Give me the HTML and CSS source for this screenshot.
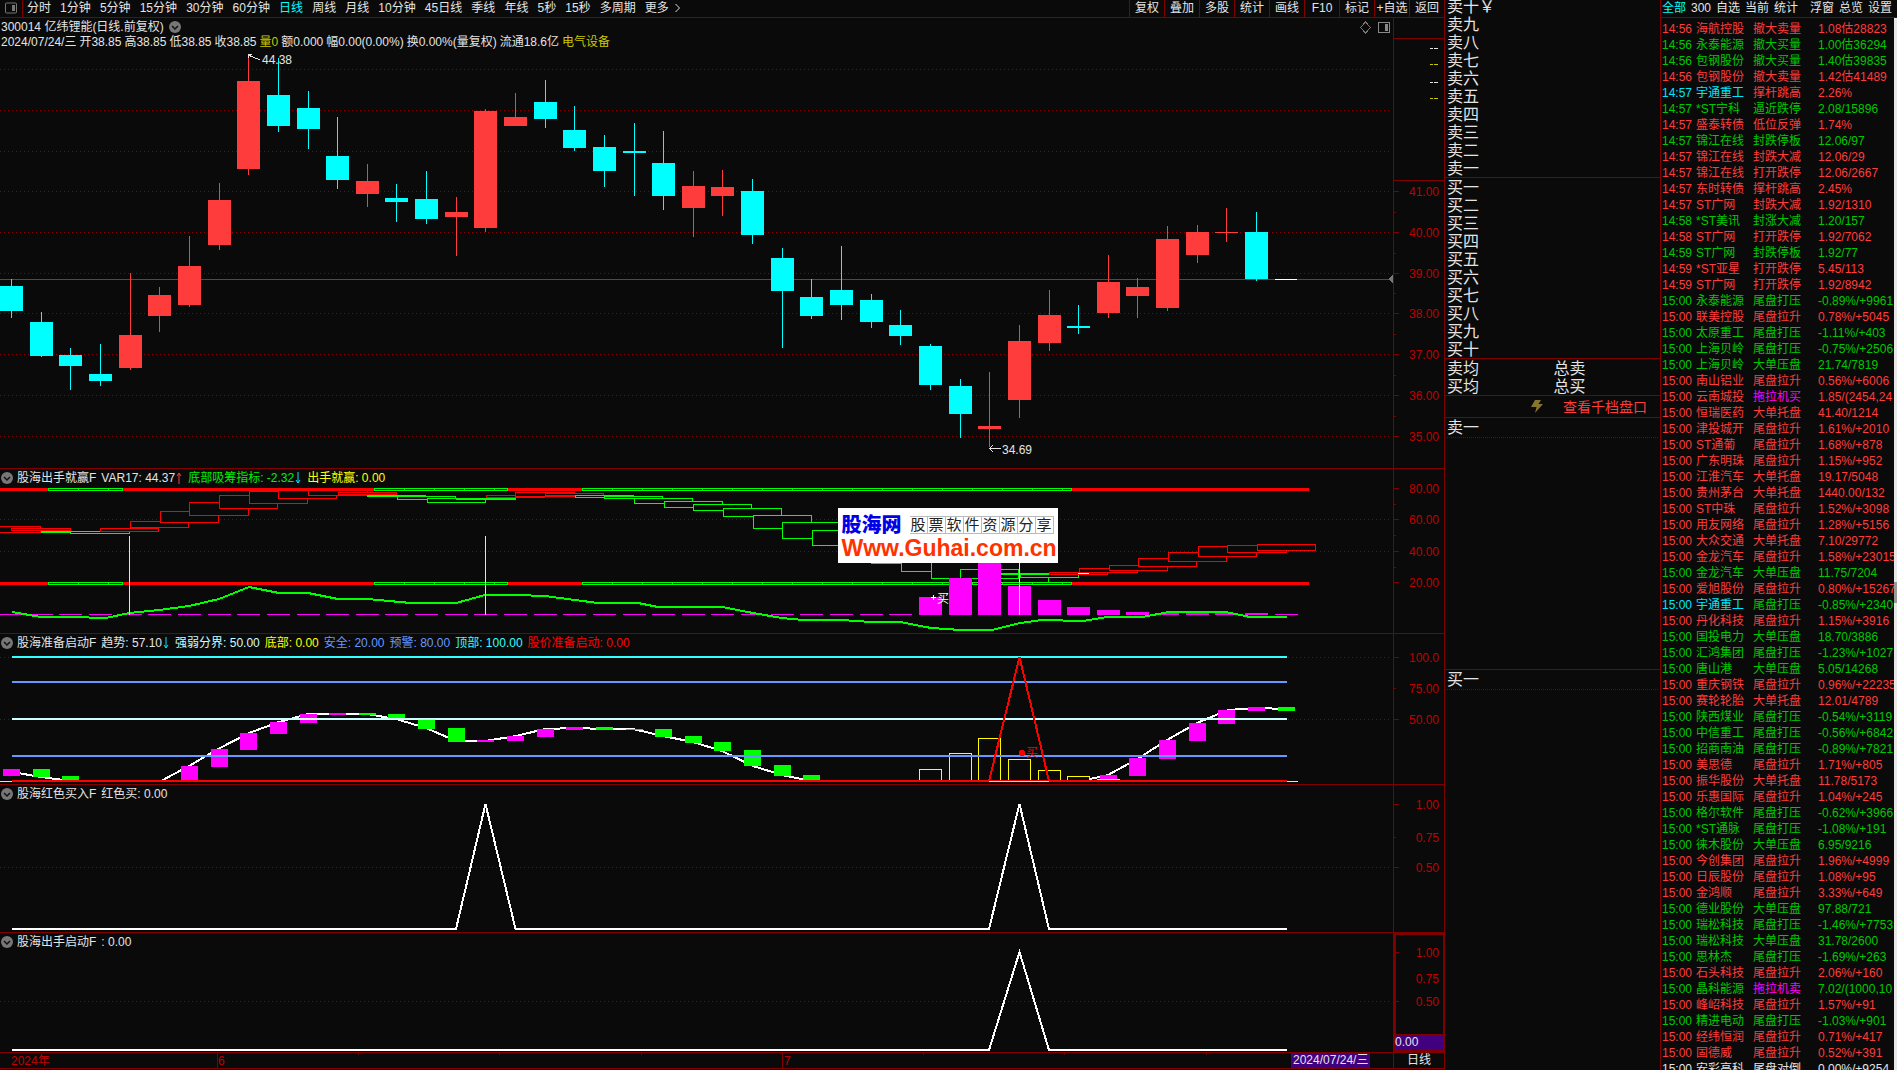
FILE: index.html
```html
<!DOCTYPE html>
<html lang="zh-CN">
<head>
<meta charset="utf-8">
<title>亿纬锂能 300014 日线</title>
<link rel="stylesheet" href="styles.css">
</head>
<body>
<div class="terminal">
  <main class="charts">
    <header class="toolbar">
      <button class="tool-icon" aria-label="侧栏"><svg width="14" height="12" viewBox="0 0 14 12"><rect x="1.5" y="1" width="11" height="10" rx="1" fill="none" stroke="#777"/><rect x="8" y="3" width="3" height="6" fill="#777"/></svg></button>
      <nav class="periods">
        <button>分时</button><button>1分钟</button><button>5分钟</button><button>15分钟</button><button>30分钟</button><button>60分钟</button><button class="active">日线</button><button>周线</button><button>月线</button><button>10分钟</button><button>45日线</button><button>季线</button><button>年线</button><button>5秒</button><button>15秒</button><button>多周期</button><button>更多<svg width="8" height="10" viewBox="0 0 8 10"><path d="M2.500 1l4 4-4 4" fill="none" stroke="#ddd"/></svg></button>
      </nav>
      <div class="actions">
        <button>复权</button><button>叠加</button><button>多股</button><button>统计</button><button>画线</button><button>F10</button><button>标记</button><button>+自选</button><button>返回</button>
      </div>
    </header>

    <section class="panel">
      <svg class="plot" id="kline" viewBox="0 18 1393 450" preserveAspectRatio="none"></svg>
      <div class="caption">
        <div class="line"><span>300014 亿纬锂能(日线.前复权)</span><svg class="fold" viewBox="0 0 12 12"><circle cx="6" cy="6" r="6"/><path d="M3 5l3 3 3-3"/></svg></div>
        <div class="line tight"><span>2024/07/24/三</span><span>开38.85</span><span>高38.85</span><span>低38.85</span><span>收38.85</span><span class="gold">量0</span><span>额0.000</span><span>幅0.00(0.00%)</span><span>换0.00%(量复权)</span><span>流通18.6亿</span><span class="gold">电气设备</span></div>
      </div>
      <svg class="axis" id="kline-axis" viewBox="0 18 50 450" preserveAspectRatio="none"></svg>
    </section>

    <section class="panel">
      <svg class="plot" id="win" viewBox="0 469 1393 164" preserveAspectRatio="none"></svg>
      <div class="caption"><div class="line"><svg class="fold" viewBox="0 0 12 12"><circle cx="6" cy="6" r="6"/><path d="M3 5l3 3 3-3"/></svg><span>股海出手就赢F</span><span>VAR17: 44.37<svg class="arrow" viewBox="0 0 6 12"><path d="M3 12V1M1 4l2-3 2 3" stroke="#ff3c3c"/></svg></span><span class="green">底部吸筹指标: -2.32<svg class="arrow" viewBox="0 0 6 12"><path d="M3 0v11M1 8l2 3 2-3" stroke="#00e5ff"/></svg></span><span class="yellow">出手就赢: 0.00</span></div></div>
      <svg class="axis" id="win-axis" viewBox="0 469 50 164" preserveAspectRatio="none"></svg>
    </section>

    <section class="panel">
      <svg class="plot" id="ready" viewBox="0 634 1393 150" preserveAspectRatio="none"></svg>
      <div class="caption"><div class="line"><svg class="fold" viewBox="0 0 12 12"><circle cx="6" cy="6" r="6"/><path d="M3 5l3 3 3-3"/></svg><span>股海准备启动F</span><span>趋势: 57.10<svg class="arrow" viewBox="0 0 6 12"><path d="M3 0v11M1 8l2 3 2-3" stroke="#00e5ff"/></svg></span><span class="pale">强弱分界: 50.00</span><span class="yellow">底部: 0.00</span><span class="blue">安全: 20.00</span><span class="blue">预警: 80.00</span><span class="cyan">顶部: 100.00</span><span class="red">股价准备启动: 0.00</span></div></div>
      <svg class="axis" id="ready-axis" viewBox="0 634 50 150" preserveAspectRatio="none"></svg>
    </section>

    <section class="panel">
      <svg class="plot" id="redbuy" viewBox="0 785 1393 147" preserveAspectRatio="none"></svg>
      <div class="caption"><div class="line"><svg class="fold" viewBox="0 0 12 12"><circle cx="6" cy="6" r="6"/><path d="M3 5l3 3 3-3"/></svg><span>股海红色买入F</span><span>红色买: 0.00</span></div></div>
      <svg class="axis" id="redbuy-axis" viewBox="0 785 50 147" preserveAspectRatio="none"></svg>
    </section>

    <section class="panel">
      <svg class="plot" id="launch" viewBox="0 933 1393 119" preserveAspectRatio="none"></svg>
      <div class="caption"><div class="line"><svg class="fold" viewBox="0 0 12 12"><circle cx="6" cy="6" r="6"/><path d="M3 5l3 3 3-3"/></svg><span>股海出手启动F</span><span>: 0.00</span></div></div>
      <svg class="axis" id="launch-axis" viewBox="0 933 50 119" preserveAspectRatio="none"></svg>
    </section>

    <footer class="dates">
      <svg class="plot" id="dates" viewBox="0 1053 1393 17" preserveAspectRatio="none"></svg>
      <div class="unit">日线</div>
    </footer>

    <a class="watermark" href="#guhai">
      <span class="wm-top"><b>股海网</b><span class="cells"><span>股</span><span>票</span><span>软</span><span>件</span><span>资</span><span>源</span><span>分</span><span>享</span></span></span>
      <strong>Www.Guhai.com.cn</strong>
    </a>
  </main>

  <aside class="book">
    <ul class="levels asks"><li>卖十￥</li><li>卖九</li><li>卖八</li><li>卖七</li><li>卖六</li><li>卖五</li><li>卖四</li><li>卖三</li><li>卖二</li><li>卖一</li></ul>
    <ul class="levels bids"><li>买一</li><li>买二</li><li>买三</li><li>买四</li><li>买五</li><li>买六</li><li>买七</li><li>买八</li><li>买九</li><li>买十</li></ul>
    <div class="totals"><span>卖均</span><span>总卖</span><span>买均</span><span>总买</span></div>
    <a class="depth" href="#depth"><svg width="12" height="13" viewBox="0 0 12 13"><path d="M4 0h6L7.500 4H12L4 13l1.500-6H0z" fill="#857530"/></svg>查看千档盘口</a>
    <div class="queue sell"><h2>卖一</h2></div>
    <div class="queue buy"><h2>买一</h2></div>
  </aside>

  <aside class="alerts">
    <header class="alert-tabs"><button class="active">全部</button><button>300</button><button>自选</button><button>当前</button><button>统计</button><span class="spacer"></span><button>浮窗</button><button>总览</button><button>设置</button></header>
    <div class="alert-body">
      <div class="alert-clip"><table><tbody id="alerts"></tbody></table></div>
      <div class="track"><div class="thumb"></div></div>
    </div>
  </aside>
</div>
<script src="app.js"></script>
</body>
</html>
```

FILE: styles.css
```css
* { box-sizing: border-box; }

html, body { margin: 0; height: 100%; }

body {
  background: #0a0a0a;
  color: #e4e4e4;
  font: 12px/16px "Liberation Sans", "Noto Sans CJK SC", sans-serif;
  overflow: hidden;
}

button {
  margin: 0;
  padding: 0 0 2px;
  border: 0;
  background: none;
  color: inherit;
  font: inherit;
  white-space: nowrap;
  cursor: pointer;
}

a { color: inherit; text-decoration: none; }

.terminal {
  display: grid;
  grid-template-columns: minmax(0, 1fr) 216px 236px;
  height: 100vh;
}

/* chart column */
.charts {
  position: relative;
  display: grid;
  grid-template-rows: 18px 451fr 165fr 151fr 148fr 120fr 17px;
  min-height: 0;
  border-right: 1px solid #800000;
}

.toolbar {
  display: flex;
  border-bottom: 1px solid #800000;
  line-height: 14px;
}

.tool-icon {
  display: flex;
  align-items: center;
  justify-content: center;
  width: 23px;
  border-right: 1px solid #800000;
}

.periods {
  display: flex;
  justify-content: space-between;
  width: 658px;
  padding-left: 4px;
}

.periods .active, .alert-tabs .active { color: #00ffff; }

.periods svg { margin-left: 4px; vertical-align: -1px; }

.actions { display: flex; margin-left: auto; }

.actions button { width: 35px; border-left: 1px solid #800000; }

.panel {
  display: grid;
  grid-template-columns: minmax(0, 1fr) 51px;
  min-height: 0;
  border-bottom: 1px solid #800000;
}

.plot {
  grid-area: 1 / 1;
  display: block;
  width: 100%;
  height: 100%;
  min-height: 0;
  overflow: hidden;
  shape-rendering: crispEdges;
}

.axis {
  grid-area: 1 / 2;
  display: block;
  width: 100%;
  height: 100%;
  min-height: 0;
  border-left: 1px solid #800000;
  shape-rendering: crispEdges;
}

.caption { grid-area: 1 / 1; align-self: start; z-index: 1; padding-top: 1px; }

.line {
  display: flex;
  align-items: center;
  gap: 5px;
  height: 16px;
  white-space: nowrap;
}

.caption .line { padding-left: 1px; }

.caption .tight { gap: 3px; height: 13px; }

.fold { width: 12px; height: 12px; fill: #777; }
.fold path { fill: none; stroke: #111; stroke-width: 1.5px; }

.caption .fold:first-child { margin-right: -1px; }

.arrow { width: 6px; height: 12px; margin: 0 1px; vertical-align: -2px; }
.arrow path { fill: none; }

.gold { color: #c8c800; }
.yellow { color: #ffff00; }
.green { color: #00f000; }
.blue { color: #6699ff; }
.cyan { color: #33ffff; }
.pale { color: #ccffff; }
.red { color: #ff0000; }

/* chart marks */
.grid { stroke: #900000; stroke-dasharray: 1 3; }
.tick { stroke: #800000; }
.up { fill: #ff3c3c; }
.down { fill: #00ffff; }
.label { fill: #c00000; }
.end { text-anchor: end; }
.note { fill: #e4e4e4; }
.rise { fill: #0a0a0a; stroke: #f00; }
.fall { fill: #0a0a0a; stroke: #0f0; }
.magenta { fill: #f0f; }
.lime { fill: #0f0; }
.pure-red { fill: #f00; }
.hollow { fill: #0a0a0a; }

.dates {
  display: grid;
  grid-template-columns: minmax(0, 1fr) 51px;
  min-height: 0;
}

.unit {
  border-left: 1px solid #800000;
  border-bottom: 1px solid #800000;
  height: 16px;
  line-height: 14px;
  text-align: center;
}

.watermark {
  position: absolute;
  left: 58%;
  top: 508px;
  display: flex;
  flex-direction: column;
  width: 220px;
  height: 55px;
  padding: 5px 4px 0;
  background: #fff;
  z-index: 2;
}

.wm-top { display: flex; justify-content: space-between; align-items: center; height: 24px; }
.wm-top b { color: #0000e6; font-size: 20px; font-weight: 900; }
.watermark strong { color: #ff3300; font: bold 23px/22px "Liberation Sans", sans-serif; }

.cells { display: flex; }

.cells span {
  width: 18px;
  height: 18px;
  border: 1px solid #bbb;
  border-left-width: 0;
  color: #222;
  font-size: 15px;
  line-height: 15px;
  text-align: center;
}

/* order book */
.book {
  display: flex;
  flex-direction: column;
  min-width: 0;
  border-right: 1px solid #800000;
  font-size: 16px;
  line-height: 18px;
}

.levels { margin: 0; padding: 0 2px; list-style: none; border-bottom: 1px solid #800000; }

.asks { height: 178px; }
.asks li:first-child { height: 16px; line-height: 14px; }
.bids { height: 181px; padding-top: 1px; }

.totals {
  display: grid;
  grid-template-columns: 1fr 1fr;
  height: 37px;
  padding: 1px 0 0 2px;
  border-bottom: 1px solid #800000;
}

.depth {
  display: flex;
  align-items: center;
  justify-content: flex-end;
  gap: 20px;
  height: 22px;
  padding-right: 13px;
  border-bottom: 1px solid #800000;
  color: #ff3c3c;
  font-size: 14px;
}

.queue h2 {
  height: 20px;
  margin: 0 2px;
  border-bottom: 1px dotted #800000;
  font: inherit;
  line-height: 20px;
}

.sell { height: 252px; border-bottom: 1px solid #800000; }

/* alert stream */
.alerts { display: flex; flex-direction: column; min-width: 0; min-height: 0; }

.alert-tabs {
  display: flex;
  gap: 5px;
  height: 18px;
  padding: 0 5px 0 1px;
  border-bottom: 1px solid #800000;
  line-height: 14px;
}

.spacer { flex: 1; }

.alert-body { display: flex; flex: 1; min-height: 0; }

.alert-clip { flex: 1; overflow: hidden; padding-top: 3px; }

.alerts table { width: 100%; table-layout: fixed; border-collapse: collapse; }

.alerts td { height: 16px; padding: 0; line-height: 16px; white-space: nowrap; }
.alerts td:nth-child(1) { width: 35px; padding-left: 1px; }
.alerts td:nth-child(2) { width: 57px; }
.alerts td:nth-child(3) { width: 65px; }

.r { color: #ff3c3c; }
.g { color: #00c800; }
.c { color: #00e5ff; }
.m { color: #ff00ff; }
.w { color: #e4e4e4; }

.track { width: 3px; background: #e8e8e8; }
.thumb { height: 21px; margin-top: 564px; background: #999; }
```

FILE: app.js
```js
const STEP = 29.64, FIRST = 11.6;
const cx = i => Math.floor(FIRST + STEP * i);
const put = (id, html) => { document.getElementById(id).innerHTML = html; };
const rect = (x, y, w, h, c) => `<rect class="${c}" x="${x}" y="${y}" width="${w}" height="${h}"/>`;
const box = (x1, y1, x2, y2, c) => `<rect class="${c}" x="${x1 + .5}" y="${y1 + .5}" width="${x2 - x1}" height="${y2 - y1}"/>`;
const hline = (x1, x2, y, color, w = 1) => `<path d="M${x1} ${y}H${x2}" stroke="${color}" stroke-width="${w}"/>`;
const vline = (x, y1, y2, color) => `<path d="M${x} ${y1}V${y2}" stroke="${color}"/>`;
const grid = ys => ys.map(y => `<path class="grid" d="M0 ${y + .5}H1390"/>`).join('');
const poly = (pts, extra) => `<polyline points="${pts}" fill="none" ${extra}/>`;

function axis(id, labels, minor, extra = '') {
  put(id, extra +
    labels.map(([y, t, tick = 5]) => `<path class="tick" d="M0 ${y + .5}H${tick}"/><text class="label end" x="45" y="${y + 5}">${t}</text>`).join('') +
    minor.map(y => `<path class="tick" d="M0 ${y + .5}H2"/>`).join(''));
}

/* candles: [direction, high, body top, body bottom, low] */
const candles = [
  ['d',279,286,311,318],['d',312,322,356,357],['d',348,355,366,390],['d',344,374,381,386],['u',273,335,368,370],
  ['u',287,295,316,332],['u',236,266,305,307],['u',183,200,245,250],['u',55,81,169,175],['d',58,95,126,132],
  ['d',91,108,129,149],['d',117,156,180,189],['u',164,181,194,207],['d',184,198,202,222],['d',171,199,219,224],
  ['u',197,212,217,256],['u',109,111,228,232],['u',93,117,126,126],['d',80,102,119,128],['d',106,130,148,151],
  ['d',135,147,171,187],['d',123,151,153,196],['d',131,163,196,210],['u',171,186,208,237],['u',170,187,196,216],
  ['d',179,191,235,244],['d',248,258,291,348],['d',279,297,316,319],['d',246,290,305,320],['d',294,300,322,328],
  ['d',310,325,336,345],['d',344,346,385,390],['d',379,386,414,438],['u',372,426,429,447],['u',325,341,400,418],
  ['u',290,315,343,351],['d',305,326,328,334],['u',255,282,313,318],['u',278,287,296,318],['u',226,239,308,311],
  ['u',225,232,255,263],['u',208,232,233,242],['d',212,232,279,281]
];
const body = candles.map(([k, hi, t, b, lo], i) => {
  const c = k === 'u' ? 'up' : 'down', x = cx(i);
  return rect(x, hi, 1, lo - hi, c) + rect(x - 11, t, 23, b - t, c);
}).join('');
put('kline', grid([69,110,151,191,232,273,313,354,395,436]) +
  hline(0, 1390, 279.5, '#4c4c4c') + '<path d="M1388 279l5-5v10z" fill="#777"/>' + body +
  hline(1275, 1297, 279.5, '#fff') +
  '<path d="M248 55l12 5M248 58v-4h4" stroke="#e4e4e4" fill="none"/><text class="note" x="262" y="64">44.38</text>' +
  '<path d="M990 448.500h11M993 445l-3 3.500 3 3.500" stroke="#e4e4e4" fill="none"/><text class="note" x="1002" y="454">34.69</text>' +
  '<path d="M1365.500 22l5 5.500-5 5.500-5-5.500z" fill="none" stroke="#777"/><rect x="1378.500" y="22.500" width="11" height="10" fill="none" stroke="#888"/><rect x="1385" y="24" width="3" height="7" fill="#888"/>');
const dash = (y, c) => `<path d="M36 ${y}h3m1 0h4" stroke="${c}"/>`;
axis('kline-axis', [[191,'41.00'],[232,'40.00'],[273,'39.00'],[313,'38.00'],[354,'37.00'],[395,'36.00'],[436,'35.00']],
  [212,253,293,334,375,416],
  '<path class="tick" d="M0 38.500H50M0 180.500H50"/>' + dash(48.5,'#e4e4e4') + dash(64.5,'#c8c800') + dash(82.5,'#e4e4e4') + dash(98.5,'#c8c800'));

/* first indicator */
const band = y => rect(0, y, 1309, 3, 'pure-red') +
  [[48,123],[374,508],[582,1072]].map(([a, b]) => {
    let s = rect(a, y, b - a, 3, 'lime') + rect(a + 1, y + 1, b - a - 2, 1, 'hollow');
    for (let x = a + 30; x < b - 8; x += 30) s += rect(x, y, 1, 3, 'lime');
    return s;
  }).join('');
const steps = [
  ['rise',-10,526,40,532],['rise',11,528,70,530],['fall',41,531,70,532],['fall',70,531,129,533],['rise',100,528,158,531],['rise',130,521,188,527],
  ['rise',160,511,218,522],['rise',189,502,248,515],['rise',219,495,277,508],['rise',249,491,307,503],['rise',278,488,336,498],
  ['rise',308,490,367,495],['rise',338,492,396,494],['fall',367,495,425,496],['fall',397,496,455,499],['fall',427,498,485,502],
  ['fall',456,498,515,499],['rise',486,495,544,497],['rise',515,492,574,496],['rise',545,493,603,495],['fall',575,495,633,497],
  ['fall',604,496,662,498],['fall',634,498,692,503],['fall',664,501,722,507],['fall',693,504,751,510],['fall',723,508,781,516],
  ['fall',753,515,811,528],['fall',782,522,840,538],['fall',812,530,870,545],['fall',842,540,900,556],['fall',871,548,931,563],
  ['fall',901,555,960,571],['fall',931,562,990,578],['fall',960,569,1018,578],['fall',1001,573,1048,574],['fall',1020,574,1078,577],
  ['rise',1049,572,1107,574],['rise',1079,568,1137,572],['rise',1109,565,1167,570],['rise',1138,558,1196,566],['rise',1168,552,1226,561],
  ['rise',1198,546,1256,556],['rise',1227,545,1286,552],['rise',1257,544,1315,550]
];
const zero = Array.from({ length: 43 }, (_, i) => rect(cx(i) - 11, 614, 23, 1, 'magenta')).join('');
const hist = [[31,597],[32,578],[33,560],[34,586],[35,600],[36,607],[37,610],[38,612],[39,613],[40,613],[41,613],[42,613]];
put('win', grid([519,551]) + steps.map(([c, a, b, x, y]) => box(a, b, x, y, c)).join('') + hline(1078, 1089, 573.5, '#fff') +
  vline(1048.5, 577, 582, '#0f0') + band(488) + band(582) + zero + rect(1275, 614, 23, 1, 'magenta') +
  hist.map(([i, y]) => rect(cx(i) - 11, y, 23, 615 - y, 'magenta')).join('') +
  poly('12,612 41,617 71,617 106,618 129,613 159,610 189,606 219,599 249,587 279,593 308,593 338,599 367,599 411,603 456,603 485,595 516,595 545,596 575,600 598,603 638,603 658,607 722,607 753,613 782,618 803,620 841,620 872,622 900,622 931,628 961,630 992,630 1020,623 1042,620 1083,621 1107,617 1142,617 1169,612 1226,612 1250,617 1287,617', 'stroke="#0f0" stroke-width="2"') +
  vline(129.5, 536, 615, '#ff0') + vline(485.5, 536, 615, '#ff0') + vline(1019.5, 560, 615, '#ff0') +
  '<path d="M931 597.500h5M933.500 595v5" stroke="#fff"/><text x="937" y="603" fill="#fff">买</text>');
axis('win-axis', [[488,'80.00'],[519,'60.00'],[551,'40.00'],[582,'20.00']], [504,535,567]);

/* second indicator: [index, top, bottom, class] */
const blocks = [
  [0,769,776,'magenta'],[1,769,777,'lime'],[2,776,780,'lime'],[6,766,780,'magenta'],[7,749,767,'magenta'],[8,733,750,'magenta'],
  [9,722,734,'magenta'],[10,714,723,'magenta'],[11,713,715,'magenta'],[12,713,715,'lime'],[13,714,718,'lime'],[14,720,729,'lime'],
  [15,728,742,'lime'],[16,740,742,'magenta'],[17,736,741,'magenta'],[18,729,737,'magenta'],[19,727,730,'magenta'],[20,727,730,'lime'],
  [21,729,730,'lime'],[22,729,737,'lime'],[23,736,743,'lime'],[24,742,751,'lime'],[25,750,766,'lime'],[26,765,776,'lime'],
  [27,775,780,'lime'],[37,775,779,'magenta'],[38,758,776,'magenta'],[39,740,759,'magenta'],[40,723,741,'magenta'],
  [41,710,724,'magenta'],[42,707,711,'magenta'],[43,707,711,'lime']
];
const humps = [[31,769],[32,753],[33,738],[34,759],[35,770],[36,776],[37,779]];
const curve = p => poly(p, 'stroke="#fff" stroke-width="2"');
put('ready', grid([657,719]) +
  curve('12,772 41,777 71,781') +
  curve('161,781 189,766 218,749 249,733 279,722 308,714 338,714 367,714 396,719 426,728 456,741 485,741 516,736 545,729 575,728 604,729 633,729 663,736 693,742 722,751 753,766 782,775 811,781') +
  curve('1090,779 1108,775 1139,758 1167,740 1197,723 1228,710 1256,708 1287,709') +
  blocks.map(([i, t, b, c]) => rect(cx(i) - 8, t, 17, b - t, c)).join('') +
  humps.map(([i, y]) => `<rect x="${cx(i) - 10.5}" y="${y + .5}" width="22" height="${781 - y}" fill="none" stroke="#ff0"/>`).join('') +
  hline(12, 1287, 657, '#33ffff', 2) + hline(12, 1287, 682, '#6699ff', 2) + hline(12, 1287, 719, '#ccffff', 2) + hline(12, 1287, 756, '#6699ff', 2) +
  hline(12, 1287, 781, '#f00', 2) + hline(0, 12, 781.5, '#ff0') + hline(989, 1049, 781.5, '#ff0') + hline(1287, 1298, 781.5, '#ff0') +
  poly('989,781 1019.5,657 1049,781', 'stroke="#f00" stroke-width="2"') +
  '<circle cx="1022" cy="753" r="3" fill="#f00"/><text x="1026" y="757" fill="#f00">买</text>');
axis('ready-axis', [[657,'100.0'],[688,'75.00',2],[719,'50.00']], []);

/* single-pulse indicators */
put('redbuy', grid([867]) + curve('12,929 456,929 485.5,804 515.5,929 989,929 1019.5,804 1049,929 1287,929'));
axis('redbuy-axis', [[804,'1.00'],[837,'0.75',2],[867,'0.50']], []);
put('launch', grid([1001]) + curve('12,1050 989,1050 1019.5,952 1049,1050 1287,1050'));
axis('launch-axis', [[952,'1.00'],[978,'0.75',2],[1001,'0.50']], [],
  '<rect x="0" y="1034" width="50" height="16" fill="#400080" stroke="#800000"/><rect x="0.500" y="933.500" width="49" height="118" fill="none" stroke="#800000" stroke-width="2"/><text class="note" x="1" y="1046">0.00</text>');

/* date ruler */
put('dates', '<path class="tick" d="M0 1068.500H1393M217.500 1053v15M782.500 1053v15M358.500 1053v2M499.500 1053v2M641.500 1053v2M923.500 1053v2M1064.500 1053v2M1206.500 1053v2"/>' +
  '<text class="label" x="11" y="1065">2024年</text><text class="label" x="218" y="1065">6</text><text class="label" x="784" y="1065">7</text>' +
  '<rect x="1291.500" y="1053" width="78" height="15" fill="#400080" stroke="#800000"/><text class="note" x="1293" y="1064">2024/07/24/三</text>');

/* alert stream: time|colour|name|action|value, with an optional colour for the time and name */
const S = { p: '尾盘拉升', d: '尾盘打压', t: '大单托盘', y: '大单压盘' };
const alerts = `14:56|r|海航控股|撤大卖量|1.08估28823
14:56|g|永泰能源|撤大买量|1.00估36294
14:56|g|包钢股份|撤大买量|1.40估39835
14:56|r|包钢股份|撤大卖量|1.42估41489
14:57|r|宇通重工|撑杆跳高|2.26%|c
14:57|g|*ST宁科|逼近跌停|2.08/15896
14:57|r|盛泰转债|低位反弹|1.74%
14:57|g|锦江在线|封跌停板|12.06/97
14:57|r|锦江在线|封跌大减|12.06/29
14:57|r|锦江在线|打开跌停|12.06/2667
14:57|r|东时转债|撑杆跳高|2.45%
14:57|r|ST广网|封跌大减|1.92/1310
14:58|g|*ST美讯|封涨大减|1.20/157
14:58|r|ST广网|打开跌停|1.92/7062
14:59|g|ST广网|封跌停板|1.92/77
14:59|r|*ST亚星|打开跌停|5.45/113
14:59|r|ST广网|打开跌停|1.92/8942
15:00|g|永泰能源|d|-0.89%/+9961
15:00|r|联美控股|p|0.78%/+5045
15:00|g|太原重工|d|-1.11%/+403
15:00|g|上海贝岭|d|-0.75%/+2506
15:00|g|上海贝岭|y|21.74/7819
15:00|r|南山铝业|p|0.56%/+6006
15:00|r|云南城投|拖拉机买|1.85/(2454,24
15:00|r|恒瑞医药|t|41.40/1214
15:00|r|津投城开|p|1.61%/+2010
15:00|r|ST通葡|p|1.68%/+878
15:00|r|广东明珠|p|1.15%/+952
15:00|r|江淮汽车|t|19.17/5048
15:00|r|贵州茅台|t|1440.00/132
15:00|r|ST中珠|p|1.52%/+3098
15:00|r|用友网络|p|1.28%/+5156
15:00|r|大众交通|t|7.10/29772
15:00|r|金龙汽车|p|1.58%/+23015
15:00|g|金龙汽车|y|11.75/7204
15:00|r|爱旭股份|p|0.80%/+15267
15:00|g|宇通重工|d|-0.85%/+2340|c
15:00|r|丹化科技|p|1.15%/+3916
15:00|g|国投电力|y|18.70/3886
15:00|g|汇鸿集团|d|-1.23%/+1027
15:00|g|唐山港|y|5.05/14268
15:00|r|重庆钢铁|p|0.96%/+22235
15:00|r|赛轮轮胎|t|12.01/4789
15:00|g|陕西煤业|d|-0.54%/+3119
15:00|g|中信重工|d|-0.56%/+6842
15:00|g|招商南油|d|-0.89%/+7821
15:00|r|美思德|p|1.71%/+805
15:00|r|振华股份|t|11.78/5173
15:00|r|乐惠国际|p|1.04%/+245
15:00|g|格尔软件|d|-0.62%/+3966
15:00|g|*ST通脉|d|-1.08%/+191
15:00|g|徕木股份|y|6.95/9216
15:00|r|今创集团|p|1.96%/+4999
15:00|r|日辰股份|p|1.08%/+95
15:00|r|金鸿顺|p|3.33%/+649
15:00|g|德业股份|y|97.88/721
15:00|g|瑞松科技|d|-1.46%/+7753
15:00|g|瑞松科技|y|31.78/2600
15:00|g|思林杰|d|-1.69%/+263
15:00|r|石头科技|p|2.06%/+160
15:00|g|晶科能源|拖拉机卖|7.02/(1000,10
15:00|r|峰岹科技|p|1.57%/+91
15:00|g|精进电动|d|-1.03%/+901
15:00|r|经纬恒润|p|0.71%/+417
15:00|r|固德威|p|0.52%/+391
15:00|w|安彩高科|尾盘对倒|0.00%/+9254`;
put('alerts', alerts.split('\n').map(row => {
  const [time, color, name, act, value, lead = color] = row.split('|');
  const actColor = act.startsWith('拖') ? 'm' : color;
  return `<tr class="${color}"><td class="${lead}">${time}</td><td class="${lead}">${name}</td><td class="${actColor}">${S[act] || act}</td><td>${value}</td></tr>`;
}).join(''));
```
